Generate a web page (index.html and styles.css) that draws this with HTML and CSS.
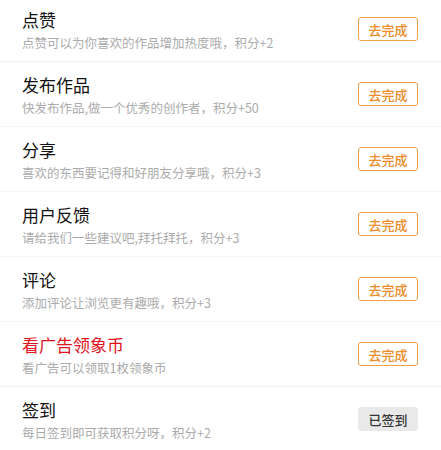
FILE: index.html
```html
<!DOCTYPE html>
<html lang="zh">
<head>
<meta charset="utf-8">
<link rel="stylesheet" href="styles.css">
</head>
<body>
<div class="list">
  <div class="row">
    <div class="info"><div class="title">点赞</div><div class="desc">点赞可以为你喜欢的作品增加热度哦，积分+2</div></div>
    <div class="btn">去完成</div>
  </div>
  <div class="row">
    <div class="info"><div class="title">发布作品</div><div class="desc">快发布作品,做一个优秀的创作者，积分+50</div></div>
    <div class="btn">去完成</div>
  </div>
  <div class="row">
    <div class="info"><div class="title">分享</div><div class="desc">喜欢的东西要记得和好朋友分享哦，积分+3</div></div>
    <div class="btn">去完成</div>
  </div>
  <div class="row">
    <div class="info"><div class="title">用户反馈</div><div class="desc">请给我们一些建议吧,拜托拜托，积分+3</div></div>
    <div class="btn">去完成</div>
  </div>
  <div class="row">
    <div class="info"><div class="title">评论</div><div class="desc">添加评论让浏览更有趣哦，积分+3</div></div>
    <div class="btn">去完成</div>
  </div>
  <div class="row">
    <div class="info"><div class="title red">看广告领象币</div><div class="desc">看广告可以领取1枚领象币</div></div>
    <div class="btn">去完成</div>
  </div>
  <div class="row">
    <div class="info"><div class="title">签到</div><div class="desc">每日签到即可获取积分呀，积分+2</div></div>
    <div class="btn done">已签到</div>
  </div>
</div>
</body>
</html>
```
FILE: styles.css
```css
html, body {
  margin: 0;
  padding: 0;
  background: #fff;
  font-family: "Noto Sans CJK SC", "Noto Sans", sans-serif;
}
.list {
  margin-top: -3px;
}
.row {
  height: 64px;
  border-bottom: 1px solid #f3f3f3;
  display: flex;
  align-items: center;
  justify-content: space-between;
  padding: 0 23px 0 22px;
}
.info {
  display: flex;
  flex-direction: column;
  gap: 3px;
}
.title {
  padding-top: 2px;
  font-size: 17px;
  line-height: 22px;
  font-weight: 400;
  color: #111;
}
.title.red {
  color: #e0141e;
}
.desc {
  font-size: 12.5px;
  line-height: 17px;
  color: #ababab;
}
.btn {
  box-sizing: border-box;
  width: 60px;
  height: 24px;
  border: 1px solid #f0a04b;
  border-radius: 3px;
  color: #eb8c28;
  font-size: 13px;
  font-weight: 500;
  display: flex;
  align-items: center;
  justify-content: center;
}
.btn.done {
  border-color: #e9e9e9;
  background: #e9e9e9;
  color: #333;
}
```
